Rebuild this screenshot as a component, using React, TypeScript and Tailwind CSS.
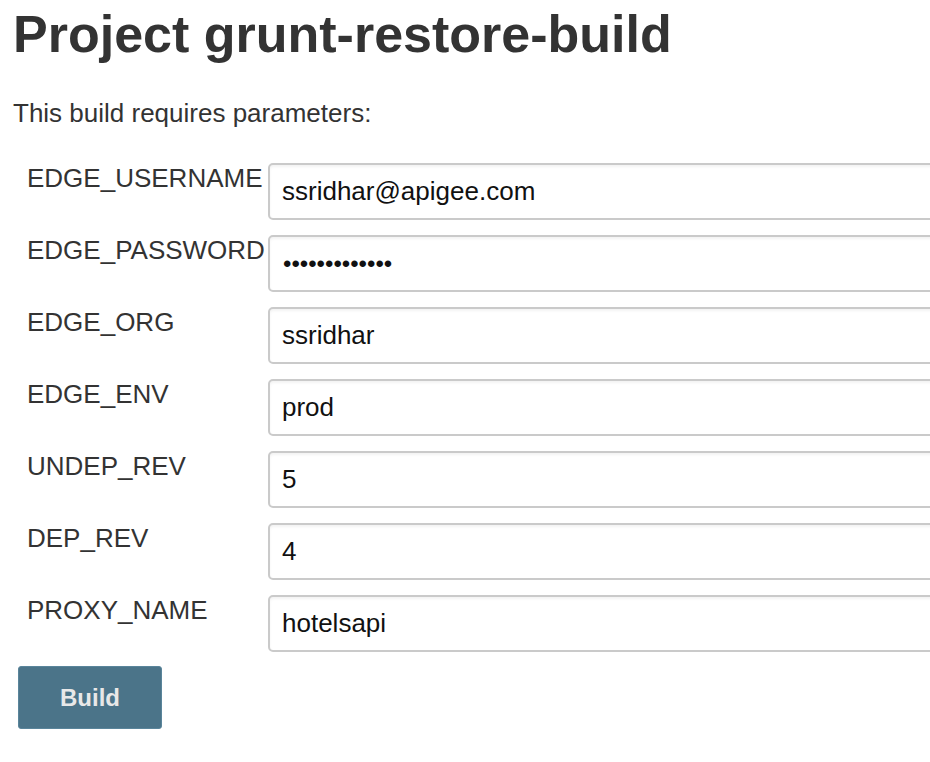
const params: { name: string; value: string; type?: string }[] = [
  { name: 'EDGE_USERNAME', value: 'ssridhar@apigee.com' },
  { name: 'EDGE_PASSWORD', value: 'passwordxxxx1', type: 'password' },
  { name: 'EDGE_ORG', value: 'ssridhar' },
  { name: 'EDGE_ENV', value: 'prod' },
  { name: 'UNDEP_REV', value: '5' },
  { name: 'DEP_REV', value: '4' },
  { name: 'PROXY_NAME', value: 'hotelsapi' },
];

export default function App() {
  return (
    <div className="w-[930px] h-[762px] overflow-hidden bg-white font-['Liberation_Sans',Arial,sans-serif] text-[#333]">
      <div className="pt-[4px] pl-[13px]">
        <h1 className="text-[52px] leading-[60px] font-bold">
          Project grunt-restore-build
        </h1>
        <p className="mt-[34px] text-[26px] leading-[30px]">
          This build requires parameters:
        </p>

        <form className="mt-[35px]" onSubmit={(e) => e.preventDefault()}>
          {params.map((p) => (
            <div key={p.name} className="flex mb-[15px]">
              <label className="w-[255px] shrink-0 pl-[14px] text-[26px] leading-[30px]">
                {p.name}
              </label>
              <input
                type={p.type ?? 'text'}
                defaultValue={p.value}
                className={
                  p.type === 'password'
                    ? 'w-[720px] shrink-0 h-[57px] border-2 border-[#cacaca] rounded-[5px] pl-[13px] text-[24px] text-[#111] bg-white shadow-[inset_0_2px_3px_rgba(0,0,0,0.05)] outline-none'
                    : 'w-[720px] shrink-0 h-[57px] border-2 border-[#cacaca] rounded-[5px] pl-[12px] text-[26px] text-[#111] bg-white shadow-[inset_0_2px_3px_rgba(0,0,0,0.05)] outline-none'
                }
              />
            </div>
          ))}

          <button
            type="submit"
            className="ml-[5px] mt-[-1px] w-[144px] h-[63px] rounded-[3px] bg-[#4b7489] border border-[#5a859b] text-[#e8e8e8] text-[24px] font-bold"
          >
            Build
          </button>
        </form>
      </div>
    </div>
  );
}
